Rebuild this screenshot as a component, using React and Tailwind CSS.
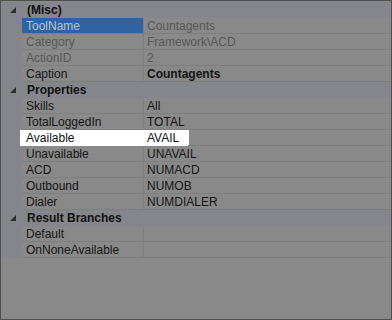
import React from "react";

const groups = [
  {
    title: "(Misc)",
    rows: [
      { name: "ToolName", value: "Countagents", selected: true, readOnly: true },
      { name: "Category", value: "Framework\\ACD", readOnly: true },
      { name: "ActionID", value: "2", readOnly: true },
      { name: "Caption", value: "Countagents", boldValue: true },
    ],
  },
  {
    title: "Properties",
    rows: [
      { name: "Skills", value: "All" },
      { name: "TotalLoggedIn", value: "TOTAL" },
      { name: "Available", value: "AVAIL", spot: true },
      { name: "Unavailable", value: "UNAVAIL" },
      { name: "ACD", value: "NUMACD" },
      { name: "Outbound", value: "NUMOB" },
      { name: "Dialer", value: "NUMDIALER" },
    ],
  },
  {
    title: "Result Branches",
    rows: [
      { name: "Default", value: "" },
      { name: "OnNoneAvailable", value: "" },
    ],
  },
];

function Glyph() {
  return (
    <svg width="6" height="6" viewBox="0 0 6 6" className="block">
      <polygon points="6,0 6,6 0,6" fill="#2e2e2e" />
    </svg>
  );
}

function Row({ r }) {
  const nameColor = r.selected
    ? "text-[#b9c4d3]"
    : r.readOnly
    ? "text-[#585858]"
    : "text-[#151515]";
  const valueColor = r.readOnly ? "text-[#585858]" : "text-[#151515]";
  return (
    <div className="relative flex h-[16px]">
      <div className="w-[21px] shrink-0 bg-[#85868b]" />
      {r.spot && <div className="absolute left-[19px] top-0 h-[16px] w-[169px] bg-white" />}
      <div
        className={`relative flex w-[121px] shrink-0 items-center border-b pl-[4px] ${
          r.selected ? "bg-[#2c63a0]" : ""
        } ${r.spot ? "border-white text-[#111]" : `border-[#7e7e7e] ${nameColor}`}`}
      >
        {r.name}
      </div>
      <div
        className={`relative flex flex-1 items-center border-b border-l pl-[3px] ${
          r.spot ? "border-l-[#f2f2f2] border-b-[#7e7e7e] text-[#111]" : `border-[#7e7e7e] ${valueColor}`
        } ${r.boldValue ? "font-bold" : ""}`}
      >
        {r.spot ? (
          <>
            <span className="absolute -left-px top-0 h-[16px] w-[45px] bg-white" />
            <span className="relative">{r.value}</span>
          </>
        ) : (
          r.value
        )}
      </div>
    </div>
  );
}

export default function App() {
  return (
    <div
      className="h-[320px] w-[392px] border border-[#4f4f4f] bg-[#898989] pt-[1px] text-[12px] leading-none"
      style={{ fontFamily: '"Liberation Sans", Arial, sans-serif' }}
    >
      {groups.map((g) => (
        <div key={g.title}>
          <div className="flex h-[16px] items-center bg-[#85868b]">
            <div className="flex w-[21px] shrink-0 justify-end pr-[6px]">
              <Glyph />
            </div>
            <span className="pl-[5px] font-bold text-[#111]">{g.title}</span>
          </div>
          {g.rows.map((r) => (
            <Row key={r.name} r={r} />
          ))}
        </div>
      ))}
    </div>
  );
}
